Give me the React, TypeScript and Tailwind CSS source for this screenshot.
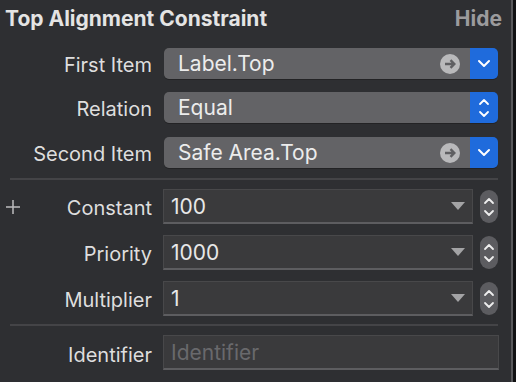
import React from "react";

const font = { fontFamily: "Inter, 'Noto Sans', sans-serif" };

function ArrowCircle() {
  return (
    <svg width="20" height="20" viewBox="0 0 20 20">
      <circle cx="10" cy="10" r="10" fill="#b9b9bb" />
      <path d="M5 10 H14 M10.5 6.2 L14.3 10 L10.5 13.8" stroke="#5f5f62" strokeWidth="2.4" fill="none" strokeLinecap="butt" strokeLinejoin="miter" />
    </svg>
  );
}

function ChevDown() {
  return (
    <svg width="14" height="9" viewBox="0 0 14 9">
      <path d="M2 2 L7 7 L12 2" stroke="#fff" strokeWidth="2" fill="none" strokeLinecap="round" strokeLinejoin="round" />
    </svg>
  );
}

function UpDown({ color = "#fff" }: { color?: string }) {
  return (
    <svg width="12" height="24" viewBox="0 0 12 24">
      <path d="M2 8 L6 4 L10 8" stroke={color} strokeWidth="1.8" fill="none" strokeLinecap="round" strokeLinejoin="round" />
      <path d="M2 16 L6 20 L10 16" stroke={color} strokeWidth="1.8" fill="none" strokeLinecap="round" strokeLinejoin="round" />
    </svg>
  );
}

function Plus() {
  return (
    <svg width="14" height="14" viewBox="0 0 14 14">
      <path d="M7 0 V14 M0 7 H14" stroke="#bdbdbf" strokeWidth="1.5" />
    </svg>
  );
}

function Label({ children, plus }: { children: React.ReactNode; plus?: boolean }) {
  return (
    <div className="flex items-center justify-between h-full">
      <div className="pl-[6px] pt-[1px] flex items-center">{plus ? <Plus /> : null}</div>
      <div className="text-[20px] text-[#dedede] leading-none pr-[1px] pt-[3px]">{children}</div>
    </div>
  );
}

function Popup({ text, arrow, updown }: { text: string; arrow?: boolean; updown?: boolean }) {
  return (
    <div className="flex h-[31px] rounded-[5px] overflow-hidden ml-[1px] shadow-[0_1px_0_#232325]">
      <div className="flex-1 bg-[#636366] flex items-center pl-[14px] pr-[10px]">
        <span className="flex-1 text-[21px] text-[#ececec] leading-none">{text}</span>
        {arrow && <ArrowCircle />}
      </div>
      <div className="w-[28px] bg-[#1f6bdc] flex items-center justify-center">
        {updown ? <UpDown /> : <ChevDown />}
      </div>
    </div>
  );
}

function Field({ value, placeholder, combo }: { value?: string; placeholder?: string; combo?: boolean }) {
  return (
    <div className="flex-1 h-[35px] bg-[#3a3a3c] border border-[#48484a] border-b-2 border-b-[#5d5d60] flex items-center pl-[7px] pr-[8px]">
      {value ? (
        <span className="flex-1 text-[21px] text-[#e8e8e8] leading-none pt-[1px]">{value}</span>
      ) : (
        <span className="flex-1 text-[21px] text-[#69696c] leading-none pt-[1px]">{placeholder}</span>
      )}
      {combo && (
        <svg width="14" height="8" viewBox="0 0 14 8" className="mr-[-1px]">
          <path d="M0 0 H14 L7 8 Z" fill="#a3a3a5" />
        </svg>
      )}
    </div>
  );
}

function Stepper() {
  return (
    <div className="w-[18px] h-[33px] rounded-full bg-[#5c5c60] flex items-center justify-center">
      <UpDown color="#eeeeee" />
    </div>
  );
}

function NumRow({ label, value, plus }: { label: string; value: string; plus?: boolean }) {
  return (
    <div className="grid grid-cols-[153px_1fr] gap-[10px] h-[35px]">
      <Label plus={plus}>{label}</Label>
      <div className="flex items-center gap-[7px]">
        <Field value={value} combo />
        <Stepper />
      </div>
    </div>
  );
}

export default function App() {
  return (
    <div className="w-[516px] h-[382px] flex bg-[#111113]" style={font}>
      <div className="w-[511px] h-full bg-[#2e2f32] flex flex-col pr-[13px]">
        <div className="h-[36px] flex items-center justify-between pl-[5px] mr-[-4px] pt-[1px]">
          <span className="text-[21px] font-bold text-[#e4e4e4] leading-none">Top Alignment Constraint</span>
          <span className="text-[21px] font-bold text-[#9b9b9d] leading-none">Hide</span>
        </div>
        <div className="mt-[12px] grid grid-cols-[153px_1fr] gap-[10px] h-[31px]">
          <Label>First Item</Label>
          <Popup text="Label.Top" arrow />
        </div>
        <div className="mt-[13px] grid grid-cols-[153px_1fr] gap-[10px] h-[31px]">
          <Label>Relation</Label>
          <Popup text="Equal" updown />
        </div>
        <div className="mt-[14px] grid grid-cols-[153px_1fr] gap-[10px] h-[31px]">
          <Label>Second Item</Label>
          <Popup text="Safe Area.Top" arrow />
        </div>
        <div className="mt-[10px] ml-[10px] h-[2px] bg-[#444447]" />
        <div className="mt-[9px]">
          <NumRow label="Constant" value="100" plus />
        </div>
        <div className="mt-[11px]">
          <NumRow label="Priority" value="1000" />
        </div>
        <div className="mt-[11px]">
          <NumRow label="Multiplier" value="1" />
        </div>
        <div className="mt-[8px] ml-[10px] h-[2px] bg-[#444447]" />
        <div className="mt-[9px] grid grid-cols-[153px_1fr] gap-[10px] h-[36px] mr-[-1px]">
          <Label>Identifier</Label>
          <Field placeholder="Identifier" />
        </div>
      </div>
      <div className="w-[2px] h-full bg-[#58585b]" />
    </div>
  );
}
